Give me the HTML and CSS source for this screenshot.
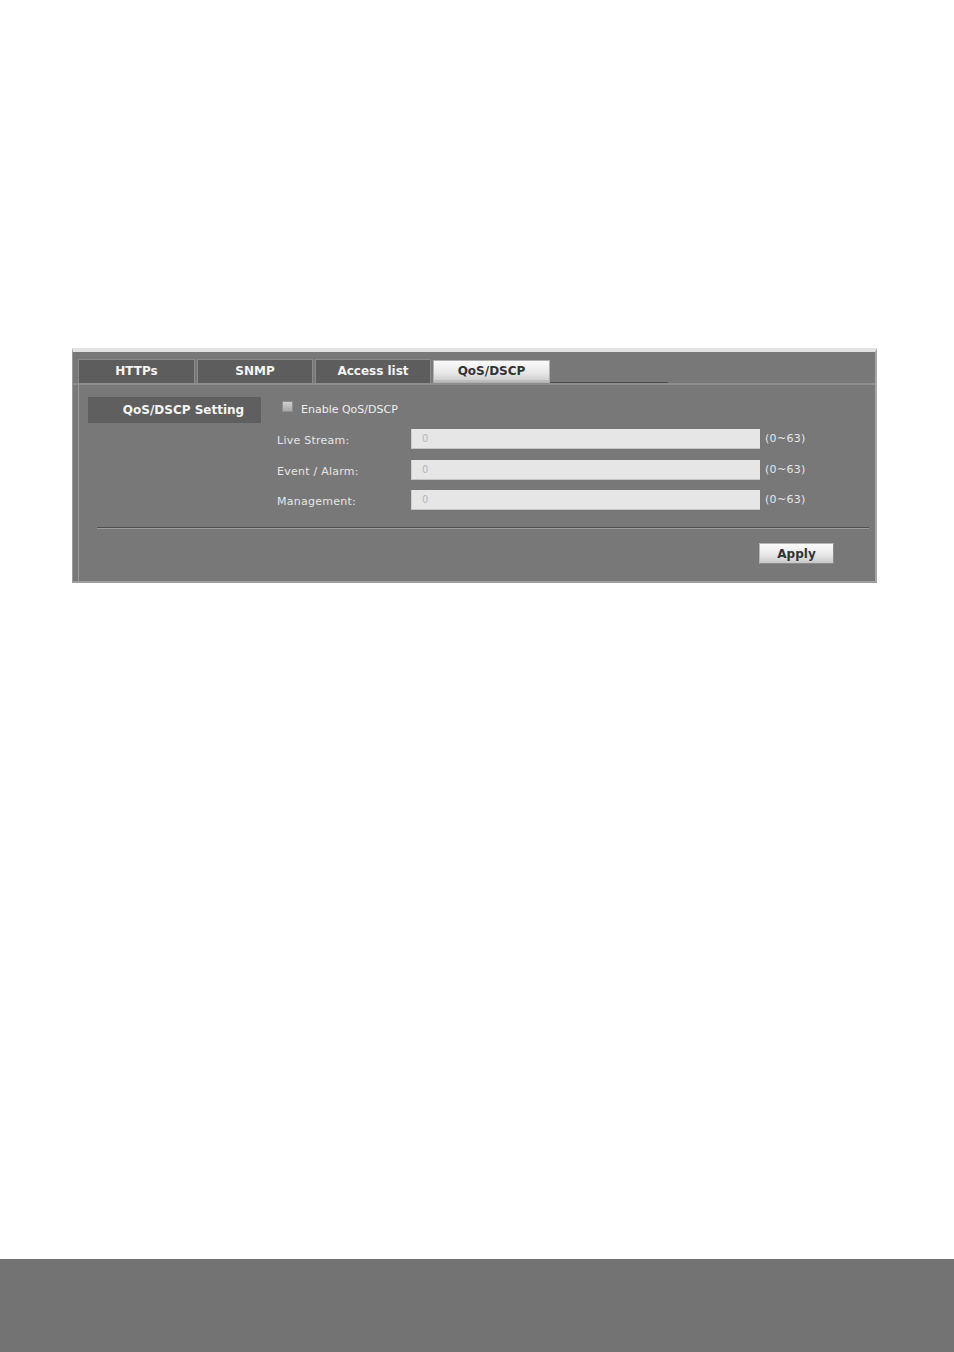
FILE: index.html
```html
<!DOCTYPE html>
<html>
<head>
<meta charset="utf-8">
<link rel="stylesheet" href="styles.css">
</head>
<body>
<div class="page">
  <div class="panel">
    <div class="tabs">
      <div class="tab">HTTPs</div>
      <div class="tab">SNMP</div>
      <div class="tab">Access list</div>
      <div class="tab active">QoS/DSCP</div>
      <div class="tab-tail"></div>
    </div>
    <div class="content">
      <div class="section">
        <div class="section-label">QoS/DSCP Setting</div>
        <div class="form">
          <div class="check-row">
            <span class="checkbox"></span>
            <span class="check-text">Enable QoS/DSCP</span>
          </div>
          <div class="field">
            <span class="field-label">Live Stream:</span>
            <span class="input">0</span>
            <span class="range">(0~63)</span>
          </div>
          <div class="field">
            <span class="field-label">Event / Alarm:</span>
            <span class="input">0</span>
            <span class="range">(0~63)</span>
          </div>
          <div class="field">
            <span class="field-label">Management:</span>
            <span class="input">0</span>
            <span class="range">(0~63)</span>
          </div>
        </div>
      </div>
      <div class="separator"></div>
      <div class="actions">
        <div class="button">Apply</div>
      </div>
    </div>
  </div>
  <div class="spacer"></div>
  <div class="footer-band"></div>
</div>
</body>
</html>
```
FILE: styles.css
```css
html, body {
  margin: 0;
  padding: 0;
  background: #ffffff;
}
.page {
  width: 954px;
  height: 1352px;
  display: flex;
  flex-direction: column;
  font-family: "DejaVu Sans", Verdana, sans-serif;
}
.panel {
  margin: 348px 0 0 72px;
  width: 805px;
  height: 235px;
  box-sizing: border-box;
  background: #787878;
  border-top: 4px solid #e2e2e2;
  border-left: 1px solid #9a9a9a;
  border-right: 2px solid #a8a8a8;
  border-bottom: 2px solid #9e9e9e;
  display: flex;
  flex-direction: column;
}
.tabs {
  display: flex;
  gap: 2px;
  padding: 7px 0 0 5px;
  height: 24px;
  border-bottom: 2px solid #8e8e8e;
}
.tab {
  width: 116px;
  height: 24px;
  box-sizing: border-box;
  background: #5d5d5d;
  border: 1px solid #8a8a8a;
  border-bottom: none;
  color: #f4f4f4;
  font-weight: bold;
  font-size: 12px;
  line-height: 23px;
  text-align: center;
}
.tab:first-child {
  width: 117px;
}
.tab.active {
  width: 117px;
  background: linear-gradient(#fafafa, #e6e6e6 60%, #c8c8c8);
  color: #333333;
  border: 1px solid #b0b0b0;
  line-height: 21px;
  box-shadow: inset 0 -2px 0 #bcbcbc;
  margin-top: 1px;
  height: 23px;
}
.tab-tail {
  width: 118px;
  align-self: flex-end;
  height: 1px;
  background: #4a4a4a;
  margin-left: -2px;
}
.content {
  flex: 1;
  margin-left: 5px;
  border-left: 1px solid #9a9a9a;
  display: flex;
  flex-direction: column;
}
.section {
  display: flex;
  padding: 12px 0 0 9px;
}
.section-label {
  width: 173px;
  height: 26px;
  box-sizing: border-box;
  padding-left: 18px;
  background: #5f5f5f;
  color: #f4f4f4;
  font-weight: bold;
  font-size: 12px;
  line-height: 26px;
  text-align: center;
}
.form {
  margin-left: 16px;
  display: flex;
  flex-direction: column;
}
.check-row {
  display: flex;
  align-items: center;
  height: 22px;
  padding-left: 5px;
  margin-bottom: 10px;
}
.checkbox {
  width: 11px;
  height: 11px;
  box-sizing: border-box;
  background: linear-gradient(#cfcfcf, #a8a8a8);
  border: 1px solid #8e8e8e;
  margin-right: 8px;
  margin-top: -3px;
}
.check-text {
  font-size: 11px;
  color: #eeeeee;
  margin-top: 2px;
}
.field {
  display: flex;
  align-items: center;
  height: 20px;
  margin-bottom: 11px;
}
.field:last-child {
  margin-bottom: 0;
}
.field + .field:last-child {
  margin-top: -1px;
}
.field-label {
  width: 134px;
  font-size: 11px;
  letter-spacing: 0.25px;
  color: #e6e6e6;
  margin-top: 2px;
}
.input {
  width: 349px;
  height: 20px;
  box-sizing: border-box;
  background: #e6e6e6;
  border-left: 1px solid #cfcfcf;
  border-bottom: 1px solid #c4c4c4;
  color: #b8b8b8;
  font-size: 10px;
  line-height: 20px;
  padding-left: 10px;
}
.range {
  margin-left: 5px;
  font-size: 11px;
  letter-spacing: 0.3px;
  color: #e6e6e6;
  margin-top: -2px;
}
.separator {
  margin: 17px 0 0 18px;
  width: 772px;
  height: 1px;
  background: #4e4e4e;
  border-bottom: 1px solid #9c9c9c;
}
.actions {
  display: flex;
  justify-content: flex-end;
  margin-left: 18px;
  width: 772px;
  padding-right: 35px;
  box-sizing: border-box;
  margin-top: 14px;
}
.button {
  width: 75px;
  height: 21px;
  box-sizing: border-box;
  background: linear-gradient(#fbfbfb, #e8e8e8 55%, #c9c9c9);
  border: 1px solid #b5b5b5;
  border-right-color: #8c8c8c;
  border-bottom-color: #8c8c8c;
  color: #333333;
  font-weight: bold;
  font-size: 12px;
  line-height: 21px;
  text-align: center;
}
.spacer {
  flex: 1;
}
.footer-band {
  height: 93px;
  background: #737373;
}
```
